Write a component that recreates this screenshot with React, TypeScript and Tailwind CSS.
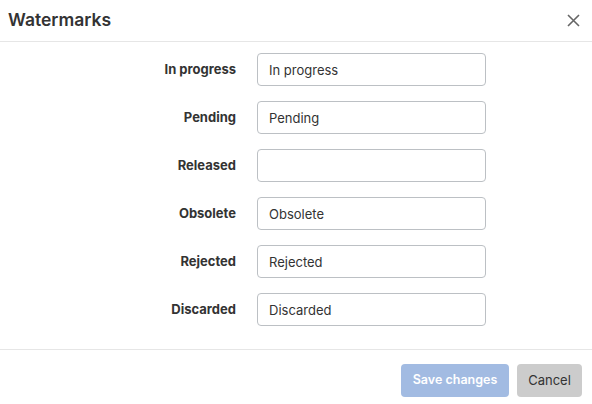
import React from "react";

const rows: [string, string][] = [
  ["In progress", "In progress"],
  ["Pending", "Pending"],
  ["Released", ""],
  ["Obsolete", "Obsolete"],
  ["Rejected", "Rejected"],
  ["Discarded", "Discarded"],
];

export default function App() {
  return (
    <div className="w-[592px] h-[404px] bg-white flex flex-col text-[#333]" style={{ fontFamily: "Inter, 'Noto Sans', sans-serif" }}>
      <div className="h-[42px] border-b border-[#e6e6e6] flex items-center justify-between pl-[8px] pr-[12px] shrink-0">
        <span className="text-[17.5px] font-semibold text-[#333]">Watermarks</span>
        <svg width="13" height="13" viewBox="0 0 13 13" className="text-[#666]">
          <path d="M1 1L12 12M12 1L1 12" stroke="currentColor" strokeWidth="1.6" />
        </svg>
      </div>
      <div className="flex-1 pt-[11px]">
        <div className="grid grid-cols-[100px_229px] gap-x-[21px] gap-y-[15px] ml-[136px]">
          {rows.map(([label, value]) => (
            <React.Fragment key={label}>
              <div className="flex items-center justify-end text-[13px] font-bold text-[#333] pt-[1px]">{label}</div>
              <input
                defaultValue={value}
                className="h-[33px] w-[229px] rounded-[4px] border border-[#bcc0c4] px-[11px] text-[13px] text-[#333] outline-none"
                style={{ fontFamily: "Inter, 'Noto Sans', sans-serif" }}
              />
            </React.Fragment>
          ))}
        </div>
      </div>
      <div className="h-[55px] border-t border-[#e6e6e6] flex items-start justify-end gap-[8px] pr-[10px] pt-[14px] shrink-0">
        <button className="h-[33px] w-[108px] rounded-[4px] bg-[#a2bbe2] text-white text-[12.5px] font-semibold">Save changes</button>
        <button className="h-[33px] w-[65px] rounded-[4px] bg-[#cccccc] text-[#333] text-[13px]">Cancel</button>
      </div>
    </div>
  );
}
